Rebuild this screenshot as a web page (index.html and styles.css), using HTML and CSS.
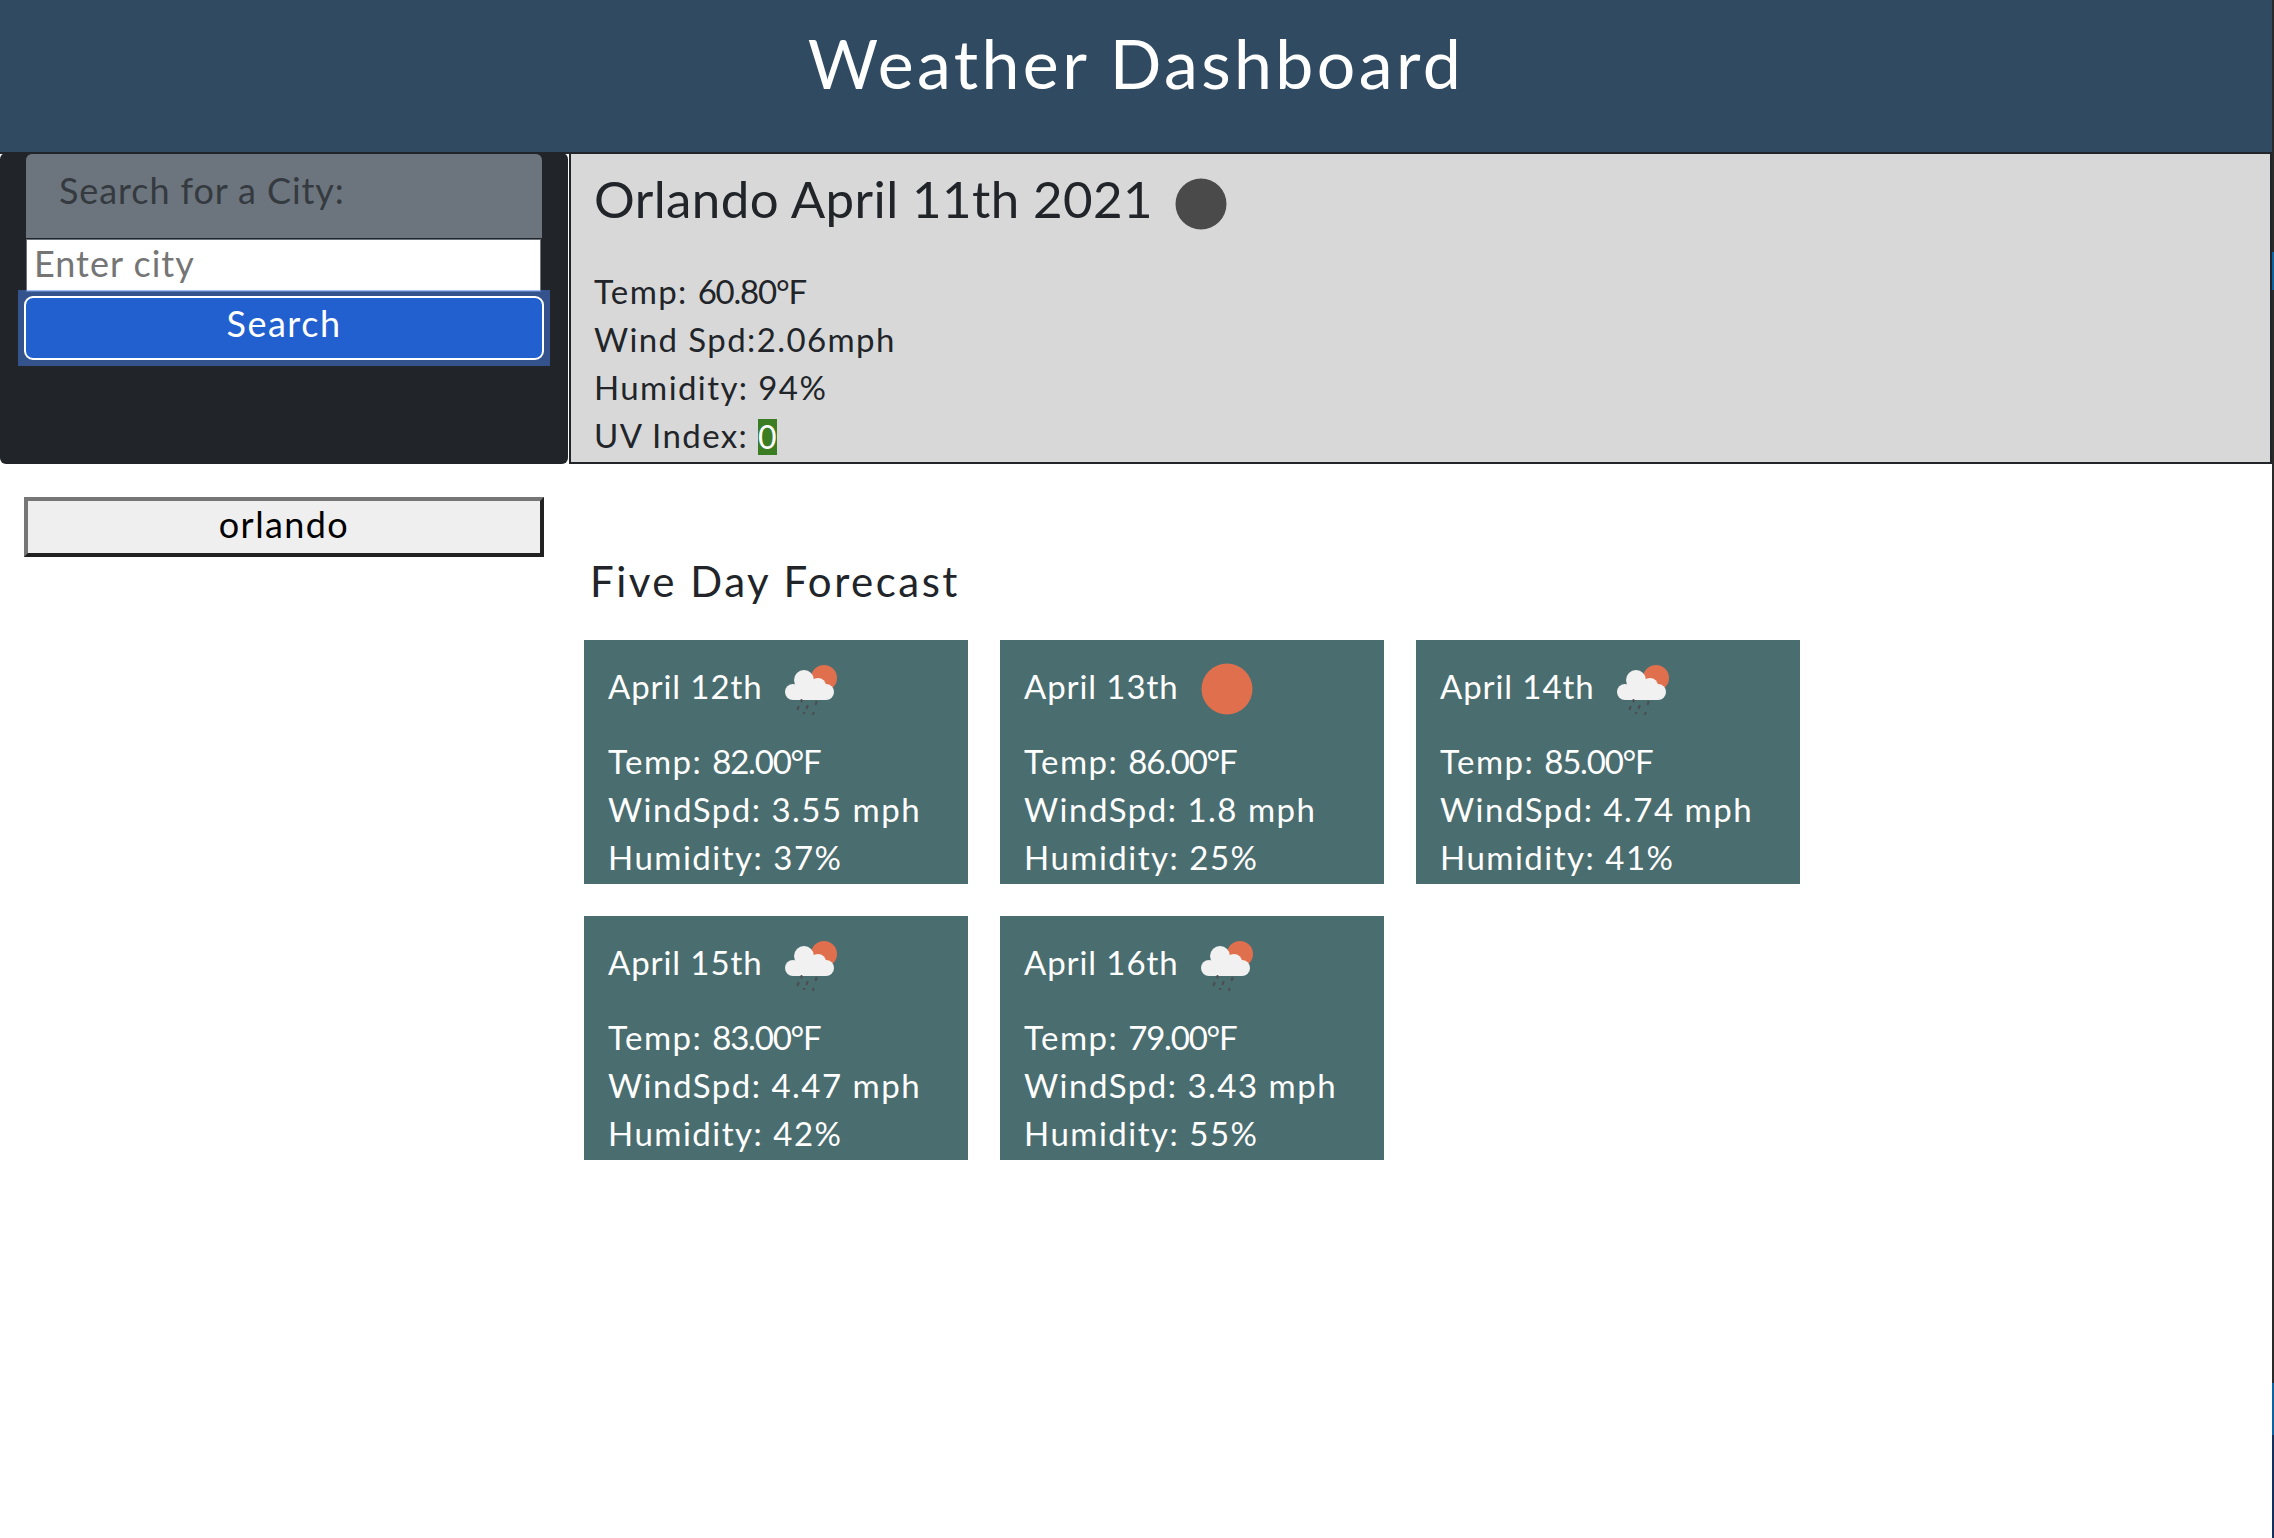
FILE: index.html
```html
<!DOCTYPE html>
<html lang="en">
<head>
<meta charset="utf-8">
<title>Weather Dashboard</title>
<link rel="stylesheet" href="styles.css">
</head>
<body>
<div class="page">
  <div class="content">
    <header class="top"><h1>Weather Dashboard</h1></header>
    <div class="layout">
      <aside class="left">
        <form class="search">
          <div class="search-label">Search for a City:</div>
          <input class="city" type="text" placeholder="Enter city">
          <div class="focus-ring"><button class="go" type="button">Search</button></div>
        </form>
        <button class="history" type="button">orlando</button>
      </aside>
      <main class="right">
        <section class="today">
          <div class="today-head">
            <h2>Orlando April 11th 2021</h2>
            <svg class="moon" viewBox="0 0 52 52"><circle cx="26" cy="26" r="25.5" fill="#4a4a4a"/></svg>
          </div>
          <p>Temp: <span class="num">60.80°F</span></p>
          <p>Wind Spd:2.06mph</p>
          <p>Humidity: 94%</p>
          <p>UV Index: <span class="uv">0</span></p>
        </section>
        <h3 class="five">Five Day Forecast</h3>
        <div class="cards">
          <article class="card">
            <div class="date"><span class="day">April 12th</span><svg class="ico" viewBox="0 0 60 60"><use href="#rain"/></svg></div>
            <p>Temp: <span class="num">82.00°F</span></p><p>WindSpd: 3.55 mph</p><p>Humidity: 37%</p>
          </article>
          <article class="card">
            <div class="date"><span class="day">April 13th</span><svg class="ico" viewBox="0 0 60 60"><circle cx="30" cy="30" r="25.5" fill="#e0704d"/></svg></div>
            <p>Temp: <span class="num">86.00°F</span></p><p>WindSpd: 1.8 mph</p><p>Humidity: 25%</p>
          </article>
          <article class="card">
            <div class="date"><span class="day">April 14th</span><svg class="ico" viewBox="0 0 60 60"><use href="#rain"/></svg></div>
            <p>Temp: <span class="num">85.00°F</span></p><p>WindSpd: 4.74 mph</p><p>Humidity: 41%</p>
          </article>
          <article class="card">
            <div class="date"><span class="day">April 15th</span><svg class="ico" viewBox="0 0 60 60"><use href="#rain"/></svg></div>
            <p>Temp: <span class="num">83.00°F</span></p><p>WindSpd: 4.47 mph</p><p>Humidity: 42%</p>
          </article>
          <article class="card">
            <div class="date"><span class="day">April 16th</span><svg class="ico" viewBox="0 0 60 60"><use href="#rain"/></svg></div>
            <p>Temp: <span class="num">79.00°F</span></p><p>WindSpd: 3.43 mph</p><p>Humidity: 55%</p>
          </article>
        </div>
      </main>
    </div>
  </div>
  <div class="edge">
    <i class="e1"></i><i class="e2"></i><i class="e3"></i><i class="e4"></i><i class="e5"></i>
  </div>
</div>
<svg class="defs" width="0" height="0">
  <symbol id="rain" viewBox="0 0 60 60">
    <circle cx="43" cy="19" r="13" fill="#e0704d"/>
    <g fill="#f1f1f1">
      <circle cx="23" cy="21" r="10"/>
      <circle cx="12" cy="33" r="8"/>
      <circle cx="37" cy="27" r="8"/>
      <circle cx="45" cy="33" r="8"/>
      <rect x="12" y="28" width="33" height="13"/>
    </g>
    <g fill="none" stroke="#4a4f52" stroke-width="2.2" stroke-linecap="round">
      <path d="M20.500 41v1.500"/><path d="M17.500 48l-.8 2"/><path d="M26.500 47l-.8 2"/><path d="M35.500 43l-.8 2"/><path d="M23 54h.4"/><path d="M32.500 54l-.4 1"/>
    </g>
  </symbol>
</svg>
</body>
</html>
```
FILE: styles.css
```css
* { box-sizing: border-box; }
html, body { margin: 0; padding: 0; height: 100%; background: #fff; overflow: hidden; }
body { font-family: "Lato", "Noto Sans", sans-serif; color: #212529; }
p { margin: 0; }
.defs { position: absolute; }

.page { display: flex; height: 1538px; }
.content { width: 2272px; }

.edge { width: 2px; display: flex; flex-direction: column; }
.edge i { display: block; }
.e1 { height: 252px; background: #2a2a2a; }
.e2 { height: 38px; background: #0a64a4; }
.e3 { height: 1093px; background: #2a2a2a; }
.e4 { height: 52px; background: #0a64a4; }
.e5 { flex: 1; background: #12305a; }

.top { height: 154px; background: #304a62; border-bottom: 2px solid #212529; text-align: center; }
.top h1 { margin: 0; padding-top: 26px; font-size: 68px; line-height: 74px; font-weight: 400; color: #fff; letter-spacing: 3.4px; }

.layout { display: grid; grid-template-columns: 569px 1fr; }

.left { display: flex; flex-direction: column; }
.search { background: #212529; padding: 0 25px; margin-top: -1px; margin-right: 1px; height: 311px; border-radius: 6px; }
.search-label { height: 84px; margin: 1px 1px 0; padding: 14px 33px 0; background: #6c757d; border-radius: 6px 6px 0 0; font-size: 36px; line-height: 44px; color: #343a40; letter-spacing: .9px; }
.city { display: block; width: 515px; height: 53px; margin: 1px 0 0 1px; padding: 0 7px 5px; border: 1px solid #6c757d; border-radius: 0; background: #fff; font-family: inherit; font-size: 36px; letter-spacing: 1px; color: #333; }
.city::placeholder { color: #757575; opacity: 1; }
.focus-ring { position: relative; margin: -2px -7px 0; padding: 6px; width: 532px; height: 76px; background: rgba(71, 127, 239, .5); }
.go { display: block; width: 520px; height: 64px; border: 2.500px solid #fff; border-radius: 9px; background: #2260d0; color: #fff; font-family: inherit; font-size: 36px; letter-spacing: 1.5px; padding: 0 0 11px; }
.history { display: block; width: 520px; height: 60px; margin: 33px 0 0 24px; border: 4px solid; border-color: #767676 #212121 #212121 #767676; background: #efefef; color: #000; font-family: inherit; font-size: 36px; letter-spacing: 1.4px; padding: 0 0 6px; }

.right { min-width: 0; }
.today { height: 310px; background: #d8d8d8; border: solid #212529; border-width: 0 2px 2px 2px; padding: 0 0 0 23px; font-size: 33px; line-height: 48px; letter-spacing: 1.4px; }
.today-head { display: flex; align-items: center; height: 113px; padding-bottom: 18px; }
.today h2 { margin: 0; font-size: 51px; line-height: 64px; font-weight: 400; letter-spacing: .4px; padding-bottom: 6px; }
.moon { width: 52px; height: 52px; margin-left: 22px; margin-top: 4px; filter: blur(.5px); }
.num { letter-spacing: -1.2px; }
.uv { display: inline-block; height: 36px; line-height: 36px; padding: 0; background: #3b7d23; color: #fff; vertical-align: -1px; font-size: 32px; letter-spacing: 0; }

.five { margin: 0; padding: 88px 0 0 21px; font-size: 42px; line-height: 58px; font-weight: 400; letter-spacing: 2.5px; color: #212529; }
.cards { display: grid; grid-template-columns: repeat(3, 384px); gap: 32px; padding: 30px 0 0 15px; }
.card { height: 244px; background: #4a6d70; color: #fff; padding: 0 0 0 24px; font-size: 33px; line-height: 48px; letter-spacing: 1.5px; }
.date { display: flex; align-items: center; height: 97px; letter-spacing: .9px; }
.day { padding-bottom: 6px; }
.ico { width: 60px; height: 60px; margin-left: 19px; filter: blur(.4px); }
```
